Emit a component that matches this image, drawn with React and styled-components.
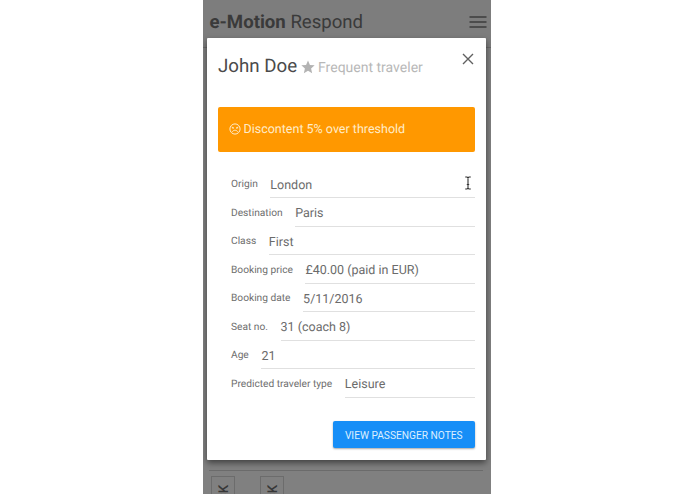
import React from 'react'
import styled, { createGlobalStyle } from 'styled-components'

const fields = [
    { label: 'Origin', value: 'London' },
    { label: 'Destination', value: 'Paris' },
    { label: 'Class', value: 'First' },
    { label: 'Booking price', value: '£40.00 (paid in EUR)' },
    { label: 'Booking date', value: '5/11/2016' },
    { label: 'Seat no.', value: '31 (coach 8)' },
    { label: 'Age', value: '21' },
    { label: 'Predicted traveler type', value: 'Leisure' },
]

const App = () => (
    <Page>
        <GlobalStyle />
        <Phone>
            <Header>
                <Brand><b>e-Motion</b> Respond</Brand>
                <Menu viewBox="0 0 18 12">
                    <path d="M.5 1H17.500M.5 6H17.500M.5 11H17.500" />
                </Menu>
            </Header>
            <Content>
                <Seats>
                    <Seat><SeatText>CK</SeatText></Seat>
                    <Seat><SeatText>CK</SeatText></Seat>
                </Seats>
            </Content>
            <Modal>
                <Title>
                    <Name>John Doe</Name>
                    <Star viewBox="0 0 24 24">
                        <path d="M12 1l3.3 7.4 8.1.8-6.1 5.3 1.8 8L12 18.3 4.9 22.5l1.8-8L.6 9.2l8.1-.8z" />
                    </Star>
                    <Tag>Frequent traveler</Tag>
                    <Close viewBox="0 0 12 12">
                        <path d="M1 1L11 11M11 1L1 11" />
                    </Close>
                </Title>
                <Alert>
                    <Face viewBox="0 0 12 12">
                        <circle cx="6" cy="6" r="5.1" />
                        <path d="M3.4 8.8C4.3 6.7 7.7 6.7 8.6 8.8M2.7 4L4.9 5M9.3 4L7.1 5M4 4.7V5.8M8 4.7V5.8" />
                    </Face>
                    <AlertText>Discontent 5% over threshold</AlertText>
                </Alert>
                <Fields>
                    {fields.map(({ label, value }) => (
                        <Row key={label}>
                            <Label>{label}</Label>
                            <Value>{value}</Value>
                        </Row>
                    ))}
                </Fields>
                <Footer>
                    <Button>View passenger notes</Button>
                </Footer>
            </Modal>
            <Cursor viewBox="0 0 8 14">
                <path d="M1.2 1H3L4 1.8L5 1H6.8M4 1.8V12.2M1.2 13H3L4 12.2L5 13H6.8M2.8 8.5H5.2" />
            </Cursor>
        </Phone>
    </Page>
)

export default App

const GlobalStyle = createGlobalStyle`
    body {
        margin: 0;
        background: #fff;
        font-family: Roboto, sans-serif;
        text-rendering: geometricPrecision;
    }
    * {
        box-sizing: border-box;
    }
`

const Page = styled.div`
    display: flex;
    justify-content: center;
    height: 494px;
    overflow: hidden;
`

const Phone = styled.div`
    position: relative;
    display: flex;
    flex-direction: column;
    width: 288px;
    height: 494px;
    margin-left: -1px;
    overflow: hidden;
    background: #808080;
`

const Header = styled.div`
    display: flex;
    flex: none;
    align-items: center;
    justify-content: space-between;
    height: 48px;
    padding: 0 4px 4px 6.5px;
    border-bottom: 1px solid #696969;
    background: #7d7d7d;
`

const Brand = styled.div`
    font-size: 18.6px;
    line-height: 22px;
    color: #3a3a3a;
`

const Menu = styled.svg`
    width: 18px;
    height: 12px;
    fill: none;
    stroke: #3c3c3c;
    stroke-width: 1.4;
`

const Content = styled.div`
    display: flex;
    flex: 1;
    flex-direction: column;
    justify-content: flex-end;
    padding: 0 8px 0 6px;
`

const Seats = styled.div`
    display: flex;
    gap: 25px;
    height: 24px;
    padding: 5px 0 0 2px;
    border-top: 1px solid #6c6c6c;
`

const Seat = styled.div`
    display: flex;
    justify-content: center;
    width: 24px;
    height: 46px;
    padding: 7.5px 0 0 2px;
    border: 1px solid #6c6c6c;
`

const SeatText = styled.span`
    height: 18px;
    writing-mode: vertical-rl;
    transform: rotate(180deg);
    text-align: right;
    font-size: 13.5px;
    font-weight: 500;
    line-height: 20px;
    color: #383838;
`

const Modal = styled.div`
    position: absolute;
    top: 37.5px;
    left: 3.5px;
    display: flex;
    flex-direction: column;
    width: 279.5px;
    height: 422.5px;
    padding: 12px 11.5px;
    border-radius: 1px;
    background: #fff;
    box-shadow: 0 3px 6px rgba(0, 0, 0, 0.5);
`

const Title = styled.div`
    display: flex;
    align-items: center;
    height: 33px;
    margin-bottom: 24.5px;
`

const Name = styled.div`
    font-size: 18.7px;
    line-height: 22px;
    color: #4a4a4a;
`

const Star = styled.svg`
    width: 14px;
    height: 14px;
    margin: 2px 3px 0 4px;
    fill: #b3b3b3;
`

const Tag = styled.div`
    padding-top: 3px;
    font-size: 14px;
    line-height: 16px;
    color: #b8b8b8;
`

const Close = styled.svg`
    width: 12px;
    height: 12px;
    margin: 0 1px 14px auto;
    fill: none;
    stroke: #606060;
    stroke-width: 1.4;
`

const Alert = styled.div`
    display: flex;
    flex: none;
    align-items: center;
    gap: 2.5px;
    height: 45px;
    padding-left: 11px;
    border-radius: 2px;
    background: #ff9800;
    color: #ffecc9;
`

const Face = styled.svg`
    width: 12px;
    height: 12px;
    margin-bottom: 2px;
    fill: none;
    stroke: currentColor;
    stroke-width: 1;
`

const AlertText = styled.div`
    font-size: 12.5px;
`

const Fields = styled.div`
    padding: 17.5px 0 0 13px;
`

const Row = styled.div`
    display: flex;
    align-items: center;
    gap: 12.6px;
    height: 28.5px;
`

const Label = styled.div`
    padding-top: 2.5px;
    font-size: 10.2px;
    line-height: 12px;
    white-space: nowrap;
    color: #6e6e6e;
`

const Value = styled.div`
    flex: 1;
    height: 28.5px;
    border-bottom: 1px solid #e0e0e0;
    font-size: 12.5px;
    line-height: 31px;
    white-space: nowrap;
    color: #6b6b6b;
`

const Footer = styled.div`
    display: flex;
    justify-content: flex-end;
    margin-top: auto;
`

const Button = styled.button`
    width: 141.5px;
    height: 27px;
    padding: 1px 0 0;
    border: 0;
    border-radius: 2px;
    background: #168ef7;
    box-shadow: 0 1px 2px rgba(0, 0, 0, 0.35);
    font-family: inherit;
    font-size: 10.2px;
    text-transform: uppercase;
    white-space: nowrap;
    color: #dceeff;
`

/* text cursor resting over the first field */
const Cursor = styled.svg`
    position: absolute;
    top: 176px;
    left: 261px;
    width: 8px;
    height: 14px;
    fill: none;
    stroke: #333;
    stroke-width: 1.1;
`
